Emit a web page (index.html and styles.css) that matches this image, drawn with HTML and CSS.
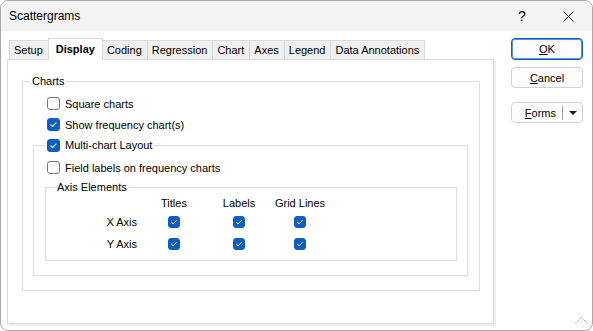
FILE: index.html
```html
<!DOCTYPE html>
<html lang="en">
<head>
    <meta charset="UTF-8">
    <title>Scattergrams</title>
    <link rel="stylesheet" href="styles.css">
</head>
<body>
    <div class="window">
        <div class="titlebar">
            <span class="title">Scattergrams</span>
            <div class="caption-btns">
                <span class="cap-btn help">?</span>
                <span class="cap-btn close">
                    <svg width="11" height="11" viewBox="0 0 11 11"><path d="M0.5 0.5 L10.5 10.5 M10.5 0.5 L0.5 10.5" stroke="#1a1a1a" stroke-width="1"/></svg>
                </span>
            </div>
        </div>

        <div class="client">
            <div class="tabs-area">
                <div class="tab-strip">
                    <span class="tab">Setup</span>
                    <span class="tab active">Display</span>
                    <span class="tab">Coding</span>
                    <span class="tab">Regression</span>
                    <span class="tab">Chart</span>
                    <span class="tab">Axes</span>
                    <span class="tab">Legend</span>
                    <span class="tab">Data Annotations</span>
                </div>

                <div class="tab-page">
                    <fieldset class="group charts">
                        <legend>Charts</legend>
                        <label class="check-row"><span class="cb"></span>Square charts</label>
                        <label class="check-row"><span class="cb checked"><svg width="13" height="13" viewBox="0 0 13 13"><path d="M3.6 6.6 L5.6 8.5 L9.4 4.6" fill="none" stroke="#fff" stroke-width="1.1"/></svg></span>Show frequency chart(s)</label>

                        <fieldset class="group multi">
                            <legend class="check-legend"><span class="cb checked"><svg width="13" height="13" viewBox="0 0 13 13"><path d="M3.6 6.6 L5.6 8.5 L9.4 4.6" fill="none" stroke="#fff" stroke-width="1.1"/></svg></span>Multi-chart Layout</legend>
                            <label class="check-row indent"><span class="cb"></span>Field labels on frequency charts</label>

                            <fieldset class="group axis">
                                <legend>Axis Elements</legend>
                                <div class="axis-grid">
                                    <span></span>
                                    <span class="col-head">Titles</span>
                                    <span class="col-head">Labels</span>
                                    <span class="col-head">Grid Lines</span>

                                    <span class="row-head">X Axis</span>
                                    <span class="cell"><span class="cb small checked"><svg width="12" height="12" viewBox="0 0 12 12"><path d="M3.3 6.1 L5.1 7.8 L8.6 4.2" fill="none" stroke="#fff" stroke-width="1"/></svg></span></span>
                                    <span class="cell"><span class="cb small checked"><svg width="12" height="12" viewBox="0 0 12 12"><path d="M3.3 6.1 L5.1 7.8 L8.6 4.2" fill="none" stroke="#fff" stroke-width="1"/></svg></span></span>
                                    <span class="cell"><span class="cb small checked"><svg width="12" height="12" viewBox="0 0 12 12"><path d="M3.3 6.1 L5.1 7.8 L8.6 4.2" fill="none" stroke="#fff" stroke-width="1"/></svg></span></span>

                                    <span class="row-head">Y Axis</span>
                                    <span class="cell"><span class="cb small checked"><svg width="12" height="12" viewBox="0 0 12 12"><path d="M3.3 6.1 L5.1 7.8 L8.6 4.2" fill="none" stroke="#fff" stroke-width="1"/></svg></span></span>
                                    <span class="cell"><span class="cb small checked"><svg width="12" height="12" viewBox="0 0 12 12"><path d="M3.3 6.1 L5.1 7.8 L8.6 4.2" fill="none" stroke="#fff" stroke-width="1"/></svg></span></span>
                                    <span class="cell"><span class="cb small checked"><svg width="12" height="12" viewBox="0 0 12 12"><path d="M3.3 6.1 L5.1 7.8 L8.6 4.2" fill="none" stroke="#fff" stroke-width="1"/></svg></span></span>
                                </div>
                            </fieldset>
                        </fieldset>
                    </fieldset>
                </div>
            </div>

            <div class="buttons">
                <button class="btn default"><u>O</u>K</button>
                <button class="btn cancel"><u>C</u>ancel</button>
                <div class="btn split">
                    <span class="split-label"><u>F</u>orms</span>
                    <span class="split-divider"></span>
                    <span class="split-arrow"></span>
                </div>
            </div>
        </div>

        <!-- resize grip -->
        <svg class="grip" width="14" height="8" viewBox="0 0 14 8"><path d="M0.5 7.5 L6.5 1.5 L12.5 7.5" fill="none" stroke="#8a8a8a" stroke-width="1" stroke-dasharray="1 1"/></svg>
    </div>
</body>
</html>
```

FILE: styles.css
```css
:root {
    --accent: #0a5fc0;
    --group-border: #dcdcdc;
    --tab-border: #d9d9d9;
    --text: #000;
}

* {
    box-sizing: border-box;
}

body {
    margin: 0;
    font-family: 'Liberation Sans', Arial, sans-serif;
    font-size: 11px;
    color: var(--text);
    background: #fff;
}

.window {
    position: relative;
    width: 593px;
    height: 331px;
    border: 1px solid #a9a9a9;
    border-radius: 8px;
    overflow: hidden;
    background: #fff;
}

/* title bar */
.titlebar {
    display: flex;
    justify-content: space-between;
    align-items: center;
    height: 30px;
    padding-left: 8px;
    background: #f3f3f3;
}

.title {
    font-size: 12px;
}

.caption-btns {
    display: flex;
    align-items: center;
    height: 100%;
}

.cap-btn {
    display: flex;
    align-items: center;
    justify-content: center;
    height: 100%;
}

.help {
    width: 46px;
    font-size: 14px;
}

.close {
    width: 47px;
}

/* client area */
.client {
    display: flex;
    padding: 7px 0 0 6px;
}

.tabs-area {
    width: 487px;
}

.tab-strip {
    display: flex;
    align-items: flex-end;
    height: 21px;
    padding-left: 2px;
}

.tab {
    display: flex;
    align-items: center;
    height: 19px;
    padding: 0 5px 0 4px;
    border: 1px solid var(--tab-border);
    border-bottom: none;
    margin-left: -1px;
    background: #f0f0f0;
}

.tab:first-child {
    margin-left: 0;
}

.tab.active {
    position: relative;
    z-index: 1;
    height: 22px;
    margin-bottom: -1px;
    padding: 0 7px 1px;
    background: #fff;
    font-weight: bold;
}

.tab-page {
    height: 265px;
    padding: 13px 13px 0 14px;
    border: 1px solid var(--tab-border);
    box-shadow: 2px 2px 0 #efefef;
}

/* group boxes */
.group {
    margin: 0;
    border: 1px solid var(--group-border);
    min-width: 0;
}

.group legend {
    line-height: 16px;
    padding: 0 2px;
}

.charts {
    padding: 4px 11px 14px 10px;
}

.charts > legend {
    margin-left: -3px;
}

.multi {
    padding: 1px 10px 14px 11px;
}

.multi > legend {
    line-height: 21px;
}

.axis {
    margin-top: 1px;
    padding: 0 0 5px 0;
}

.axis > legend {
    margin-left: 9px;
}

/* checkboxes */
.check-row,
.check-legend {
    display: flex;
    align-items: center;
    gap: 5px;
    height: 21px;
}

.check-row {
    margin-left: 14px;
}

.check-row.indent {
    margin-left: 2px;
}

.cb {
    display: inline-block;
    flex: none;
    width: 13px;
    height: 13px;
    border: 1px solid #7a7a7a;
    border-radius: 3px;
    background: #fdfdfd;
}

.cb svg {
    display: block;
    margin: -1px;
}

.cb.checked {
    border-color: var(--accent);
    background: var(--accent);
}

.cb.small {
    width: 12px;
    height: 12px;
}

/* axis table */
.axis-grid {
    display: grid;
    grid-template-columns: 94px 68px 62px 60px;
    grid-template-rows: 16px 22px 22px;
    align-items: center;
}

.col-head {
    text-align: center;
}

.row-head {
    text-align: right;
    padding-right: 3px;
}

.cell {
    display: flex;
    justify-content: center;
}

/* dialog buttons */
.buttons {
    display: flex;
    flex-direction: column;
    width: 72px;
    margin-left: 17px;
}

.btn {
    display: flex;
    align-items: center;
    justify-content: center;
    width: 72px;
    height: 21px;
    padding: 0;
    border: 1px solid #d0d0d0;
    border-radius: 4px;
    background: #fdfdfd;
    font-family: inherit;
    font-size: 11px;
    color: var(--text);
}

.btn.default {
    height: 22px;
    border-color: var(--accent);
    box-shadow: inset 0 0 0 1px #5b95d8;
}

.btn.cancel {
    margin-top: 7px;
}

.btn.split {
    margin-top: 14px;
    justify-content: flex-end;
    padding-right: 5px;
}

.split-divider {
    width: 1px;
    height: 14px;
    margin: 0 6px;
    background: #a0a0a0;
}

.split-arrow {
    width: 0;
    height: 0;
    border-left: 4px solid transparent;
    border-right: 4px solid transparent;
    border-top: 4px solid #1a1a1a;
}

.grip {
    position: absolute;
    right: 3px;
    bottom: 6px;
}
```
